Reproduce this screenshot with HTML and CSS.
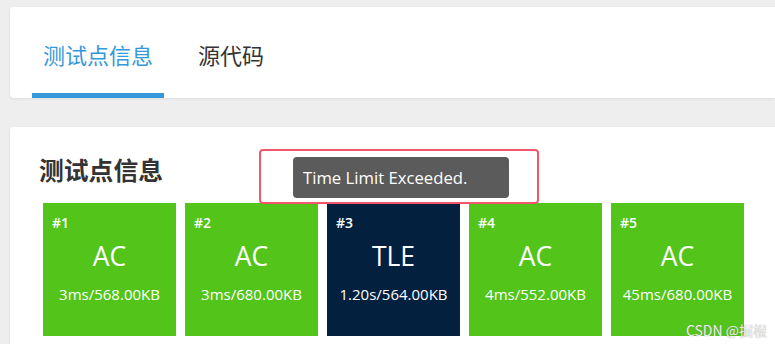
FILE: index.html
```html
<!DOCTYPE html>
<html lang="zh-CN">
<head>
    <meta charset="UTF-8">
    <meta name="viewport" content="width=device-width, initial-scale=1.0">
    <title>测试点信息</title>
    <link rel="stylesheet" href="styles.css">
</head>
<body>
    <div class="tabs-card">
        <div class="tab active">测试点信息</div>
        <div class="tab">源代码</div>
    </div>

    <div class="cases-card">
        <h2 class="cases-title">测试点信息</h2>
        <div class="case-list">
            <div class="case ac">
                <div class="case-num">#1</div>
                <div class="case-result">AC</div>
                <div class="case-stat">3ms/568.00KB</div>
            </div>
            <div class="case ac">
                <div class="case-num">#2</div>
                <div class="case-result">AC</div>
                <div class="case-stat">3ms/680.00KB</div>
            </div>
            <div class="case tle">
                <div class="case-num">#3</div>
                <div class="case-result">TLE</div>
                <div class="case-stat">1.20s/564.00KB</div>
                <div class="tooltip">Time Limit Exceeded.</div>
            </div>
            <div class="case ac">
                <div class="case-num">#4</div>
                <div class="case-result">AC</div>
                <div class="case-stat">4ms/552.00KB</div>
            </div>
            <div class="case ac">
                <div class="case-num">#5</div>
                <div class="case-result">AC</div>
                <div class="case-stat">45ms/680.00KB</div>
            </div>
        </div>
    </div>

    <!-- red highlight drawn over the screenshot -->
    <div class="highlight"></div>

    <div class="watermark">CSDN @掘根</div>
</body>
</html>
```

FILE: styles.css
```css
body {
    margin: 0;
    background-color: #eeeeee;
    font-family: "Open Sans", "Noto Sans CJK SC", sans-serif;
    color: #333;
    overflow: hidden;
    position: relative;
    height: 344px;
}

.tabs-card {
    margin: 7px 0 0 10px;
    height: 91px;
    background-color: white;
    border-radius: 4px 0 0 4px;
    box-shadow: 0 1px 3px rgba(0, 0, 0, 0.08);
    display: flex;
    padding-left: 22px;
    gap: 23px;
}

.tab {
    padding: 8px 11px 0;
    font-family: "Noto Sans CJK SC", sans-serif;
    font-size: 22px;
    color: #333;
    display: flex;
    align-items: center;
    border-bottom: 5px solid transparent;
}

.tab.active {
    color: #3498db;
    border-bottom-color: #3498db;
}

.cases-card {
    margin: 29px 0 0 10px;
    padding: 25px 0 20px 29px;
    background-color: white;
    border-radius: 4px 0 0 4px;
    box-shadow: 0 1px 3px rgba(0, 0, 0, 0.08);
}

.cases-title {
    margin: 0;
    font-family: "Noto Sans CJK SC", sans-serif;
    font-size: 24.8px;
    line-height: 34px;
    font-weight: bold;
    color: #333;
}

.case-list {
    display: flex;
    gap: 9px;
    margin-top: 17px;
    padding-left: 4px;
}

.case {
    position: relative;
    width: 133px;
    height: 133px;
    color: white;
    text-align: center;
}

.case.ac {
    background-color: #52c41a;
}

.case.tle {
    background-color: #03203f;
}

.case-num {
    text-align: left;
    padding: 10px 0 0 9px;
    font-size: 14px;
    line-height: 20px;
    font-weight: 600;
}

.case-result {
    margin-top: 5px;
    font-size: 26.5px;
    line-height: 36px;
}

.case-stat {
    margin-top: 10px;
    font-size: 15px;
    line-height: 20px;
}

.tooltip {
    position: absolute;
    left: -34px;
    top: -46px;
    width: 216px;
    height: 41px;
    box-sizing: border-box;
    padding-left: 10px;
    background-color: #5b5b5b;
    border-radius: 4px;
    font-size: 16.7px;
    line-height: 41px;
    text-align: left;
    white-space: nowrap;
}

.highlight {
    position: absolute;
    left: 259px;
    top: 149px;
    width: 280px;
    height: 55px;
    box-sizing: border-box;
    border: 2px solid #f4566c;
    border-radius: 4px;
}

.watermark {
    position: absolute;
    right: 8px;
    bottom: 4px;
    font-family: "Noto Sans CJK SC", sans-serif;
    font-size: 14px;
    color: rgba(255, 255, 255, 0.85);
    text-shadow: 0 0 1px #888;
}
```
